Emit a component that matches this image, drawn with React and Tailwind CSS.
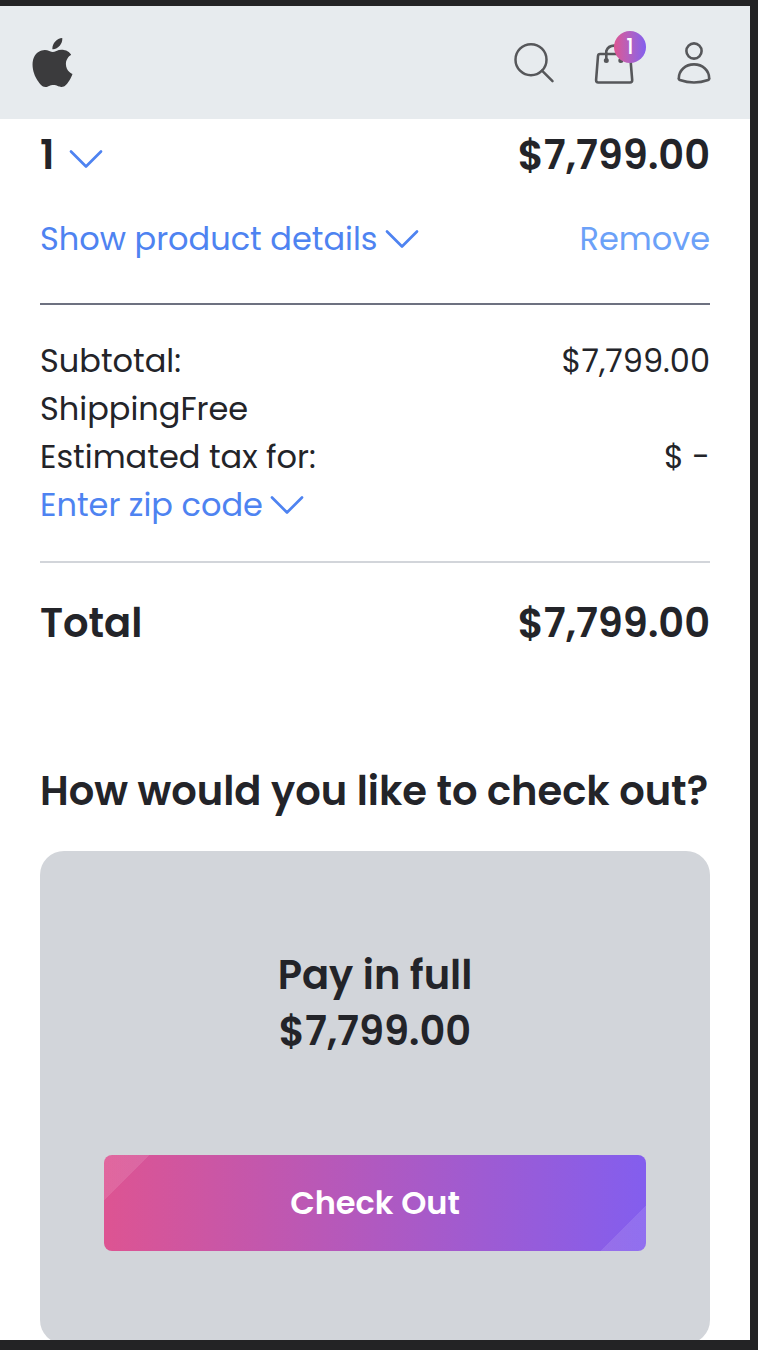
import { SiApple } from "react-icons/si";

function Chevron({ className = "" }) {
  return (
    <svg viewBox="0 0 34 20" fill="none" stroke="currentColor" strokeWidth="2.7" strokeLinecap="round" strokeLinejoin="round" className={`w-[34px] h-5 shrink-0 ${className}`}>
      <path d="M2 2.5L17 17.5L32 2.5" />
    </svg>
  );
}

function Header() {
  return (
    <header className="flex h-[113px] items-center justify-between bg-[#e7ebee] pl-[27.6px] pr-[38px]">
      <SiApple className="size-[49px] text-[#3b3b3d]" />
      <nav className="flex items-center pt-px text-[#56575a]">
        <svg viewBox="0 0 44 44" fill="none" stroke="currentColor" strokeWidth="2.5" strokeLinecap="round" className="size-11">
          <circle cx="19" cy="18.7" r="15.5" />
          <path d="M30 29.7L40.5 40.2" />
        </svg>
        <div className="relative ml-[36px] mr-[40px]">
          <svg viewBox="0 0 44 44" fill="none" stroke="currentColor" strokeWidth="2.6" strokeLinecap="round" strokeLinejoin="round" className="size-11">
            <path d="M8 13H36.4Q38 13 38.2 15L40.2 39Q40.2 41.5 38.1 41.5H6.2Q4.1 41.5 4.1 39L6 15Q6.2 13 8 13Z" />
            <path d="M14.3 19.6V10A8.3 8 0 0 1 30 10V19.6" />
            <circle cx="14.3" cy="19.6" r="1.2" fill="currentColor" />
            <circle cx="28.8" cy="19.6" r="1.2" fill="currentColor" />
          </svg>
          <span className="absolute -top-[10px] left-[22px] flex size-8 items-center justify-center rounded-full bg-linear-to-r from-[#dd5492] to-[#835eee] text-[21px] font-medium text-white">1</span>
        </div>
        <svg viewBox="0 0 36 44" fill="none" stroke="currentColor" strokeWidth="2.6" className="h-11 w-9">
          <circle cx="18" cy="10" r="7.6" />
          <path d="M2.8 37.4C2.8 29.5 9.2 23.4 18 23.4S33.2 29.5 33.2 37.4Q33.4 38.6 32.2 39C23 42.3 13 42.3 3.8 39Q2.6 38.6 2.8 37.4Z" />
        </svg>
      </nav>
    </header>
  );
}

export default function App() {
  return (
    <div className="h-[1350px] w-[758px] overflow-hidden bg-[#232325] pt-1.5 pr-2 pb-2.5 font-[Poppins,Inter,sans-serif] text-[#232429]">
      <div className="h-[1334px] overflow-hidden bg-white">
        <Header />
        <main className="px-10 pt-2 text-[32px] leading-[48px]">
          <div className="flex items-center justify-between text-[40px] leading-[56px] font-semibold">
            <div className="flex items-center">
              <span className="w-[29px]">1</span>
              <Chevron className="mt-2 text-[#4e83f1]" />
            </div>
            <span>$7,799.00</span>
          </div>
          <div className="mt-8 flex justify-between text-[#4e83f1]">
            <button className="flex items-center gap-[7px]">
              <span>Show product details</span>
              <Chevron />
            </button>
            <button className="text-[#6ba1f8]">Remove</button>
          </div>
          <hr className="mt-10 border-t-2 border-[#6d7180]" />
          <div className="mt-8 flex justify-between">
            <span>Subtotal:</span>
            <span>$7,799.00</span>
          </div>
          <p>ShippingFree</p>
          <div className="flex justify-between">
            <span>Estimated tax for:</span>
            <span>$ -</span>
          </div>
          <button className="flex h-12 items-center gap-[7px] text-[#4e83f1]">
            <span>Enter zip code</span>
            <Chevron />
          </button>
          <hr className="mt-8 border-t-2 border-[#d2d5da]" />
          <div className="mt-8 flex justify-between text-[40px] leading-[56px] font-semibold">
            <span>Total</span>
            <span>$7,799.00</span>
          </div>
          <h2 className="mt-28 text-[40px] leading-[56px] font-semibold whitespace-nowrap">How would you like to check out?</h2>
          <section className="mt-8 flex h-[493px] flex-col items-center rounded-3xl bg-[#d2d5da] px-16 pt-24 text-[40px] leading-[56px] font-semibold">
            <h3>Pay in full</h3>
            <p>$7,799.00</p>
            <button className="mt-24 flex h-24 w-full items-center justify-center rounded-lg bg-[linear-gradient(135deg,#ffffff1c_32px,transparent_32px),linear-gradient(315deg,#ffffff1c_32px,transparent_32px),linear-gradient(to_right,#dd5492,#835eee)] text-[32px] text-white">
              Check Out
            </button>
          </section>
        </main>
      </div>
    </div>
  );
}
